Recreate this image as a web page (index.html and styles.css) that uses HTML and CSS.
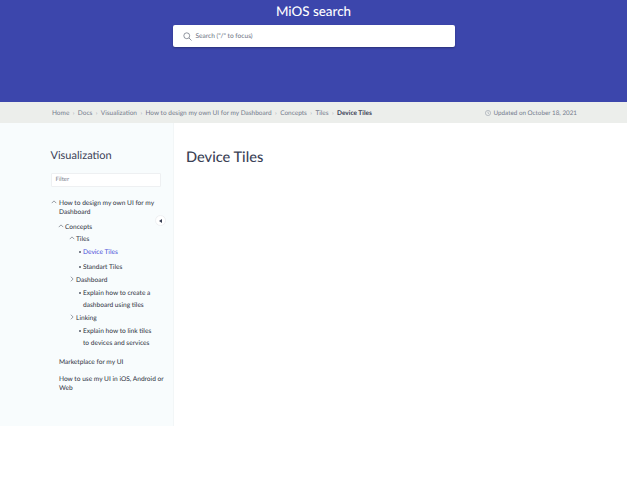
FILE: index.html
```html
<!DOCTYPE html>
<html lang="en">
<head>
<meta charset="utf-8">
<title>Device Tiles</title>
<link rel="stylesheet" href="styles.css">
</head>
<body>
<header class="hero">
  <h2 class="brand">MiOS search</h2>
  <div class="search">
    <svg class="search-icon" viewBox="0 0 12 12" width="9" height="9"><circle cx="5" cy="5" r="3.9"/><path d="M8 8l3.4 3.4"/></svg>
    <span class="search-text">Search ("/" to focus)</span>
  </div>
</header>
<nav class="crumbs">
  <div class="trail">
    <span>Home</span><i>›</i><span>Docs</span><i>›</i><span>Visualization</span><i>›</i><span>How to design my own UI for my Dashboard</span><i>›</i><span>Concepts</span><i>›</i><span>Tiles</span><i>›</i><b>Device Tiles</b>
  </div>
  <div class="updated">
    <svg viewBox="0 0 12 12" width="6" height="6"><circle cx="6" cy="6" r="5.2"/><path d="M6 3v3.2l2 1.2"/></svg>
    <span>Updated on October 18, 2021</span>
  </div>
</nav>
<div class="layout">
  <aside class="sidebar">
    <h3 class="side-title">Visualization</h3>
    <div class="filter">Filter</div>
    <ul class="tree">
      <li class="l1 has-icon"><svg class="chev" viewBox="0 0 8 8"><path d="M1 5.5L4 2.5l3 3"/></svg>How to design my own UI for my Dashboard</li>
      <li class="l2 has-icon"><svg class="chev" viewBox="0 0 8 8"><path d="M1 5.5L4 2.5l3 3"/></svg>Concepts</li>
      <li class="l3 has-icon"><svg class="chev" viewBox="0 0 8 8"><path d="M1 5.5L4 2.5l3 3"/></svg>Tiles</li>
      <li class="leaf active">Device Tiles</li>
      <li class="leaf">Standart Tiles</li>
      <li class="l3 has-icon"><svg class="chev" viewBox="0 0 8 8"><path d="M2.5 1l3 3-3 3"/></svg>Dashboard</li>
      <li class="leaf">Explain how to create a dashboard using tiles</li>
      <li class="l3 has-icon"><svg class="chev" viewBox="0 0 8 8"><path d="M2.5 1l3 3-3 3"/></svg>Linking</li>
      <li class="leaf">Explain how to link tiles to devices and services</li>
      <li class="l1 plain">Marketplace for my UI</li>
      <li class="l1 plain">How to use my UI in iOS, Android or Web</li>
    </ul>
    <div class="collapse"><span class="tri"></span></div>
  </aside>
  <main class="content">
    <h1 class="page-title">Device Tiles</h1>
  </main>
</div>
</body>
</html>
```
FILE: styles.css
```css
* { box-sizing: border-box; }
html, body { margin: 0; padding: 0; background: #fff; }
body { font-family: "Lato", "Liberation Sans", sans-serif; color: #3a4155; text-rendering: geometricPrecision; }
ul { list-style: none; margin: 0; padding: 0; }
.hero { height: 102px; background: #3c46ac; padding-top: 2.5px; display: flex; flex-direction: column; align-items: center; }
.brand { margin: 0; font-size: 13.4px; line-height: 17px; font-weight: 500; color: #fff; }
.search { width: 282px; height: 22px; margin-top: 5.5px; background: #fff; border-radius: 2px; box-shadow: 0 1px 2px rgba(0,0,0,.3); display: flex; align-items: center; padding-left: 10px; gap: 4px; }
.search-icon { fill: none; stroke: #6d7480; stroke-width: 1; }
.search-text { font-size: 6.6px; color: #6a7180; }
.crumbs { height: 21px; background: #eceeeb; padding: 1px 50px 0 52px; display: flex; align-items: center; justify-content: space-between; font-size: 6.5px; color: #747b8c; }
.trail { display: flex; align-items: center; }
.trail i { font-style: normal; margin: 0 3.4px; font-size: 6px; color: #9aa0ac; }
.trail b { font-weight: 700; color: #3a4155; }
.updated { display: flex; align-items: center; gap: 3px; font-size: 6.3px; }
.updated svg { fill: none; stroke: #8b92a0; stroke-width: 1; margin-bottom: 1px; }
.layout { display: flex; height: 303px; }
.sidebar { position: relative; width: 174px; background: #f8fcfd; border-right: 1px solid #f2f6f7; padding: 25px 4px 0 50.5px; }
.side-title { margin: 0; font-size: 11px; line-height: 15px; font-weight: 400; color: #3a4155; }
.filter { width: 110px; height: 14px; margin-top: 10px; background: #fff; border: 1px solid #eef0f2; border-radius: 1px; padding-left: 4px; font-size: 6px; line-height: 12px; color: #7c8290; }
.tree { margin-top: 12px; font-size: 6.6px; line-height: 9px; color: #2d3140; }
.tree li { position: relative; }
.chev { position: absolute; width: 6px; height: 6px; top: 0; fill: none; stroke: #555b68; stroke-width: .8; }
.l1 { padding: 0 5px 0 8.5px; margin-bottom: 5.5px; }
.l1 .chev { left: 0; }
.l2 { padding-left: 14.5px; margin-bottom: 3px; }
.l2 .chev { left: 7.5px; }
.l3 { padding-left: 25.5px; margin-bottom: 2.5px; }
.l3 .chev { left: 18.5px; }
.leaf { padding: 0 17px 0 32.5px; margin-bottom: 2.75px; line-height: 12px; }
.leaf::before { content: ""; position: absolute; left: 28px; top: 5px; width: 2px; height: 2px; border-radius: 50%; background: #555b68; }
.leaf.active { color: #4a50d8; }
.plain { margin-top: 8.25px; margin-bottom: 0; }
.collapse { position: absolute; left: 155px; top: 92px; width: 11px; height: 11px; border-radius: 50%; background: #fff; border: 1px solid #eef0f2; display: flex; align-items: center; justify-content: center; }
.tri { width: 0; height: 0; border-top: 2px solid transparent; border-bottom: 2px solid transparent; border-right: 3px solid #3a4155; }
.content { flex: 1; padding: 26px 12px; }
.page-title { margin: 0; font-size: 14.6px; line-height: 18px; font-weight: 500; color: #3a4155; }
```
